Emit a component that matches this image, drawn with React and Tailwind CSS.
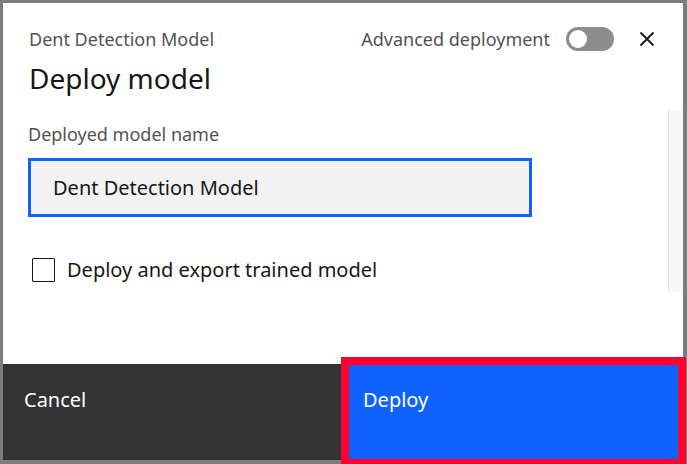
export default function App() {
  const font = { fontFamily: '"Noto Sans", "Open Sans", sans-serif' };
  return (
    <div className="w-[687px] h-[464px] bg-[#7d7d7d] pl-[3px] pt-[3px] pr-[4px] pb-[4px] overflow-hidden" style={font}>
      <div className="relative w-full h-full flex flex-col bg-white">
        <div className="flex-1 flex flex-col">
          <div className="flex items-start justify-between pl-[26px] pr-[28px] pt-[24px]">
            <div className="flex flex-col">
              <div className="text-[18px] leading-[24px] text-[#525252]">Dent Detection Model</div>
              <div className="text-[28px] leading-[36px] text-[#161616] mt-[9px]">Deploy model</div>
            </div>
            <div className="flex items-center">
              <span className="text-[18px] leading-[24px] text-[#525252]">Advanced deployment</span>
              <div className="ml-[16px] w-[48px] h-[24px] rounded-full bg-[#8d8d8d] flex items-center px-[3px]">
                <div className="w-[18px] h-[18px] rounded-full bg-white" />
              </div>
              <svg className="ml-[25px]" width="16" height="16" viewBox="0 0 16 16">
                <path d="M1.5 1.5 L14.5 14.5 M14.5 1.5 L1.5 14.5" stroke="#161616" strokeWidth="1.8" />
              </svg>
            </div>
          </div>
          <div className="flex flex-1">
            <div className="flex-1 flex flex-col pl-[25px] pt-[26px]">
              <div className="text-[18px] leading-[24px] text-[#525252]">Deployed model name</div>
              <div className="mt-[12px] w-[504px] h-[59px] border-[3px] border-[#0f62fe] bg-[#f2f2f2] flex items-center pl-[22px] text-[20px] text-[#161616]">
                Dent Detection Model
              </div>
              <label className="mt-[40px] flex items-center">
                <span className="ml-[4px] w-[23px] h-[24px] border-[1.5px] border-[#161616] rounded-[1px]" />
                <span className="ml-[12px] text-[20px] leading-[26px] text-[#161616]">Deploy and export trained model</span>
              </label>
            </div>
            <div className="w-[15px] self-start mt-[14px] h-[182px] bg-[#f7f7f7] border-l border-[#e0e0e0]" />
          </div>
        </div>
        <div className="h-[96px] flex">
          <button className="w-[339px] h-full bg-[#333333] text-white text-[20px] text-left pl-[21px] pt-[22px] leading-[28px] flex items-start">
            Cancel
          </button>
          <button className="flex-1 h-full bg-[#0f62fe] text-white text-[20px] text-left pl-[21px] pt-[22px] leading-[28px] flex items-start">
            Deploy
          </button>
        </div>
        <div className="absolute left-[338px] top-[354px] w-[345px] h-[110px] border-[8px] border-[#ff0030] pointer-events-none" />
      </div>
    </div>
  );
}
